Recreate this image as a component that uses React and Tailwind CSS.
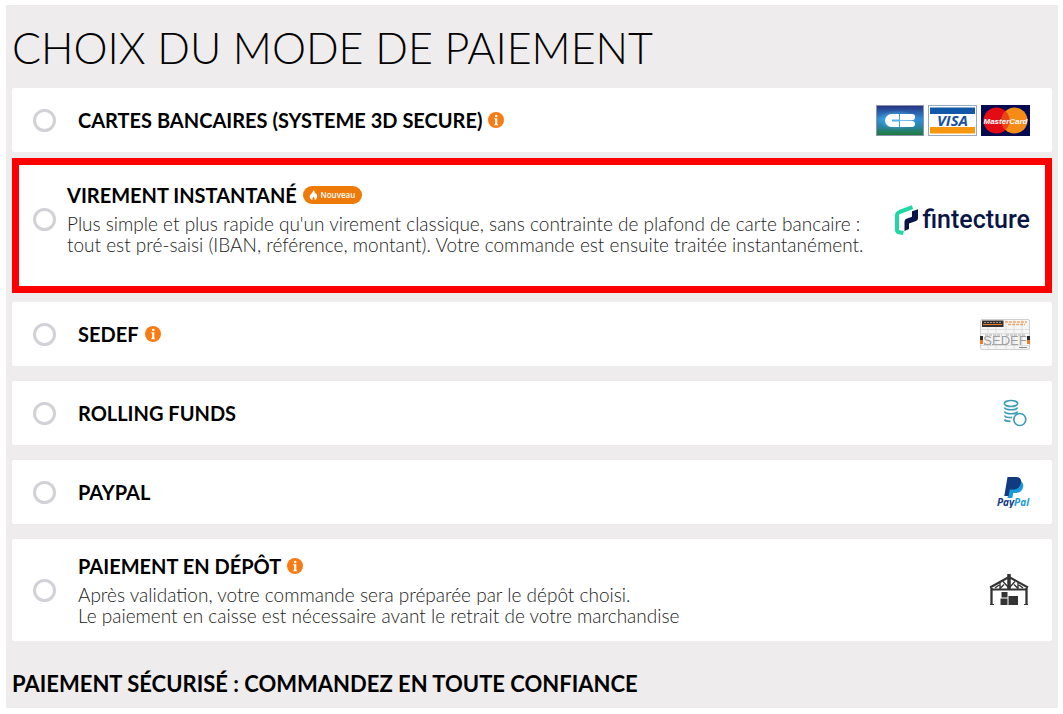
const InfoButton = ({ label }) => (
  <button type="button" aria-label={label} className="shrink-0">
    <svg viewBox="0 0 16 16" className="h-4 w-4">
      <circle cx="8" cy="8" r="8" fill="#f97b14" />
      <circle cx="8.200" cy="4" r="1.300" fill="#fff" />
      <path d="M6.300 6.300h3v6h.8v1H6.300v-1h.8v-5h-.8z" fill="#fff" />
    </svg>
  </button>
);

const NewBadge = () => (
  <span className="flex h-[18px] w-[59px] shrink-0 items-center justify-center gap-[2px] rounded-full bg-[#ee7a09] font-['Open_Sans',sans-serif] text-[8px] leading-none font-semibold text-white">
    <svg viewBox="0 0 9 10" className="h-[10px] w-[9px]">
      <path d="M4.400 0C5.800 1.300 6 2.400 5.800 3.700l1-.7C8 4.500 8.500 5.800 8 7.400 7.700 8.700 6.800 9.500 5.700 10c.2-1.500-.2-2.400-1.200-3.300C3.500 7.700 3.200 8.700 3.400 10 1.700 9.500.5 8.200.7 6.400.9 4.400 4.100 3 4.400 0z" fill="#fff" />
    </svg>
    Nouveau
  </span>
);

const CardLogos = () => (
  <div className="flex gap-1">
    <svg viewBox="0 0 48 31" className="h-[31px] w-12" role="img" aria-label="CB">
      <defs>
        <linearGradient id="cb" x1="0" y1="0" x2="0" y2="1">
          <stop offset="0" stopColor="#28307f" />
          <stop offset="0.45" stopColor="#2f8fd6" />
          <stop offset="0.65" stopColor="#2b86b4" />
          <stop offset="1" stopColor="#1f7a35" />
        </linearGradient>
        <radialGradient id="cbGlow">
          <stop offset="0" stopColor="#56b8f2" />
          <stop offset="1" stopColor="#56b8f2" stopOpacity="0" />
        </radialGradient>
      </defs>
      <rect x="0.5" y="0.5" width="47" height="30" fill="url(#cb)" stroke="#8c93ac" />
      <ellipse cx="21" cy="15" rx="20" ry="10" fill="url(#cbGlow)" />
      <path d="M15.500 9H23v5.500h-7v2h7V22h-7.500a6.500 6.500 0 0 1 0-13z" fill="#fff" />
      <path d="M24 9h12a3.100 3.100 0 0 1 0 6.200H24zM24 16h12a3 3 0 0 1 0 6H24z" fill="#fff" />
    </svg>
    <svg viewBox="0 0 49 31" className="h-[31px] w-[49px]" role="img" aria-label="Visa">
      <rect x="0.5" y="0.5" width="48" height="30" fill="#fff" stroke="#9ba9bd" />
      <rect x="2" y="2.500" width="45" height="6.500" fill="#1258a8" />
      <rect x="2" y="22" width="45" height="6.500" fill="#f7960f" />
      <text x="24.500" y="21" textAnchor="middle" className="font-['Open_Sans',sans-serif] text-[15px] font-bold italic" fill="#17509e">VISA</text>
    </svg>
    <svg viewBox="0 0 49 31" className="h-[31px] w-[49px]" role="img" aria-label="MasterCard">
      <rect width="49" height="31" fill="#060a50" />
      <circle cx="15.500" cy="15.500" r="13" fill="#e30c14" />
      <circle cx="33.500" cy="15.500" r="13" fill="#f68c18" />
      <path d="M24.500 6.100a13 13 0 0 1 0 18.800 13 13 0 0 1 0-18.800z" fill="#ea4716" />
      <text x="24.500" y="19" textAnchor="middle" className="font-['Liberation_Sans',sans-serif] text-[8px] font-bold italic" fill="#fff">MasterCard</text>
    </svg>
  </div>
);

const FintectureLogo = () => (
  <div className="flex items-center gap-1">
    <svg viewBox="0 0 24 32" className="h-8 w-6" aria-hidden="true">
      <path d="M18.500 3.200 5.500 8Q3 9 3 11.500V26q0 1.800 2 2.200l4.500.8" fill="none" stroke="#1fd9a4" strokeWidth="4" strokeLinejoin="round" />
      <path d="M10.500 27V17.500q0-2 2-2.800l5.500-2V7.200l6-2v9q0 2-2 2.800l-7 2.500V25z" fill="#0b1447" />
    </svg>
    <span className="font-['Roboto',sans-serif] text-[25px] leading-8 font-medium text-[#0b1447]">fintecture</span>
  </div>
);

const SedefLogo = () => (
  <svg viewBox="0 0 50 31" className="h-[31px] w-[50px]" role="img" aria-label="Sedef">
    <rect x="0.500" y="0.500" width="49" height="30" rx="1.500" fill="#f6f6f6" stroke="#cfcfcf" />
    <path d="M1 10.500h48M1 14.500h48M1 26.500h48M8 1v29M16 1v29M26 1v29M34 1v29M42 1v29" stroke="#dedede" fill="none" />
    <rect x="2" y="1.500" width="21.500" height="6.500" fill="#37312d" />
    <path d="M4 3.500h17" stroke="#9b8b80" strokeDasharray="2 1" />
    <path d="M3 5.500h19" stroke="#e57a2b" />
    <path d="M25 3h22M28 5.500h17" stroke="#f2a76c" strokeWidth="1.500" strokeDasharray="3 1" />
    <text x="25" y="26" textAnchor="middle" className="font-['Liberation_Sans',sans-serif] text-[13px]" fill="#a0a0a0">SEDEF</text>
    <path d="M5 16h17M26 16h19M4 25.500h18" stroke="#a9a9a9" strokeDasharray="3 1" />
    <rect x="0" y="17" width="3" height="4" fill="#2b2b2b" />
    <rect x="0" y="21" width="3" height="4" fill="#f07c22" />
    <rect x="47" y="17" width="3" height="4" fill="#2b2b2b" />
    <rect x="47" y="21" width="3" height="4" fill="#f07c22" />
    <path d="M39 28.500h8" stroke="#8a8a8a" />
  </svg>
);

const CoinsIcon = () => (
  <svg viewBox="0 0 27 28" className="h-7 w-[27px]" fill="none" stroke="#3f9cb8" strokeWidth="1.700" role="img" aria-label="Rolling Funds">
    <ellipse cx="8" cy="4.500" rx="6.700" ry="3" />
    <path d="M1.500 8.500c1 3 12 3 13 0M1.500 12.500c1 3 12 3 13 0M1.500 16.500c.8 1.800 4 2.300 7.500 1.800M1.500 20.500c.7 1.300 3 1.900 6 1.800" />
    <circle cx="16.800" cy="20.500" r="6" />
  </svg>
);

const PaypalLogo = () => (
  <svg viewBox="0 0 34 32" className="h-8 w-[34px]" role="img" aria-label="PayPal">
    <path d="M14.500 5h8c4 0 5.500 3 4.500 6.500-1 4-4 5.500-7.500 5.500h-2.200l-1 5h-4.800z" fill="#199bd7" />
    <path d="M11.500 1h8.200c4.300 0 6.200 2.500 5.300 6-1 4.500-4 6.500-8.300 6.500h-2.900L12.500 20H8.300z" fill="#123a80" />
    <text x="17" y="30" textAnchor="middle" className="font-['Open_Sans',sans-serif] text-[10px] font-bold italic" fill="#123a80">
      Pay<tspan fill="#199bd7">Pal</tspan>
    </text>
  </svg>
);

const WarehouseIcon = () => (
  <svg viewBox="0 0 41 32" className="h-8 w-[41px]" fill="none" stroke="#333" role="img" aria-label="Dépôt">
    <path d="M1 13.500 20 3 39 13.500M2.500 15.500h35" strokeWidth="2" />
    <path d="M2.500 14v16.500M37.500 14v16.500" strokeWidth="2.300" />
    <path d="M20 0v15" strokeWidth="3.500" />
    <path d="m20 14-6-6.500M20 14l6-6.500M11 15V9M29 15V9M11 14.500l4-4M29 14.500l-4-4M6 14l4-3M34 14l-4-3" strokeWidth="1.400" />
    <path d="M1 30.500h4M35 30.500h4" />
    <path d="M12.500 18h6v5.500h-6zM11.500 24.500h7V31h-7zM19.500 22H29v9h-9.500z" fill="#333" stroke="none" />
  </svg>
);

const PaymentOption = ({ id, title, extra, description, logo, className }) => (
  <li className={`flex items-center bg-white ${className}`}>
    <input
      type="radio"
      name="payment"
      id={id}
      className="h-[23px] w-[23px] shrink-0 appearance-none rounded-full border-3 border-[#d1d1d8] bg-white checked:border-[#ee7a09]"
    />
    <div className="flex min-w-0 flex-1 items-center justify-between">
      <div className="min-w-0 flex-1">
        <div className="flex items-center gap-[6px]">
          <label htmlFor={id} className="text-[20px] leading-6 font-bold text-black">{title}</label>
          {extra}
        </div>
        {description}
      </div>
      <div className="shrink-0">{logo}</div>
    </div>
  </li>
);

export default function App() {
  return (
    <div className="bg-white py-[5px] pr-[5px] pl-[6px] font-['Lato',sans-serif]">
      <main className="bg-[#eeecec] px-[6px] pt-[19px] pb-[10px]">
        <h1 className="text-[43px] leading-[48px] font-light text-black">CHOIX DU MODE DE PAIEMENT</h1>
        <ul className="mt-4 flex flex-col">
          <PaymentOption
            id="card"
            title="CARTES BANCAIRES (SYSTEME 3D SECURE)"
            extra={<InfoButton label="Informations cartes bancaires" />}
            logo={<CardLogos />}
            className="min-h-16 gap-[22px] rounded-[2px] pr-[22px] pl-[21px]"
          />
          <PaymentOption
            id="transfer"
            title="VIREMENT INSTANTANÉ"
            extra={<NewBadge />}
            description={
              <p className="mt-[6px] pb-[2px] text-[19px] leading-[21px] font-light text-[#222]">
                Plus simple et plus rapide qu'un virement classique, sans contrainte de plafond de carte bancaire :
                <br />
                tout est pré-saisi (IBAN, référence, montant). Votre commande est ensuite traitée instantanément.
              </p>
            }
            logo={<FintectureLogo />}
            className="mt-[6px] min-h-[135px] gap-[11px] border-7 border-[#ff0000] pr-[15px] pb-[12px] pl-[14px]"
          />
          <PaymentOption
            id="sedef"
            title="SEDEF"
            extra={<InfoButton label="Informations Sedef" />}
            logo={<SedefLogo />}
            className="mt-[9px] min-h-16 gap-[22px] rounded-[2px] pr-[22px] pl-[21px]"
          />
          <PaymentOption
            id="rolling"
            title="ROLLING FUNDS"
            logo={<CoinsIcon />}
            className="mt-[15px] min-h-16 gap-[22px] rounded-[2px] pr-[22px] pl-[21px]"
          />
          <PaymentOption
            id="paypal"
            title="PAYPAL"
            logo={<PaypalLogo />}
            className="mt-[15px] min-h-16 gap-[22px] rounded-[2px] pr-[22px] pl-[21px]"
          />
          <PaymentOption
            id="depot"
            title="PAIEMENT EN DÉPÔT"
            extra={<InfoButton label="Informations paiement en dépôt" />}
            description={
              <p className="mt-[6px] text-[19px] leading-[21px] font-light text-[#222]">
                Après validation, votre commande sera préparée par le dépôt choisi.
                <br />
                Le paiement en caisse est nécessaire avant le retrait de votre marchandise
              </p>
            }
            logo={<WarehouseIcon />}
            className="mt-[15px] min-h-[102px] gap-[22px] rounded-[2px] pr-[22px] pl-[21px]"
          />
        </ul>
        <h2 className="mt-[29px] text-[22px] leading-7 font-bold text-black">
          PAIEMENT SÉCURISÉ : COMMANDEZ EN TOUTE CONFIANCE
        </h2>
      </main>
    </div>
  );
}
